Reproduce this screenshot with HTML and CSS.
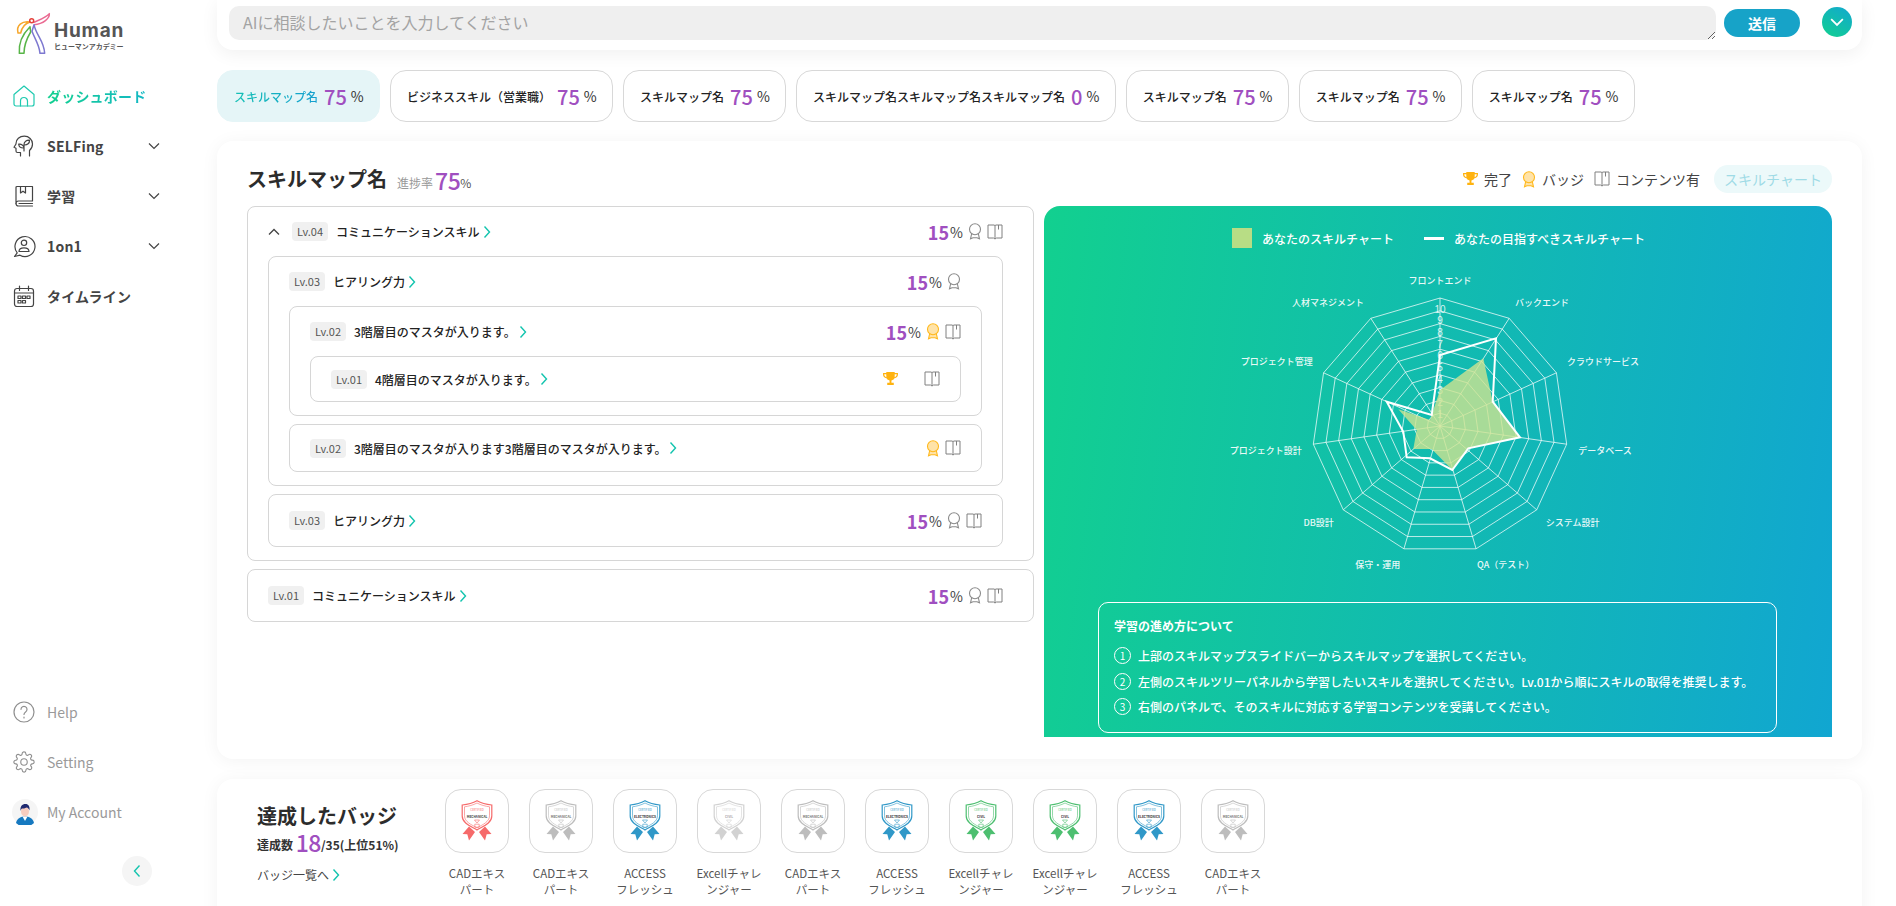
FILE: index.html
```html
<!DOCTYPE html>
<html lang="ja">
<head>
<meta charset="utf-8">
<title>スキルマップ</title>
<link rel="stylesheet" href="styles.css">
</head>
<body>
<svg class="defs" width="0" height="0" aria-hidden="true">
  <defs>
    <symbol id="i-home" viewBox="0 0 24 24"><path d="M2 10.500 12 2l10 8.500V20a2 2 0 0 1-2 2H4a2 2 0 0 1-2-2Z"/><path d="M8.500 22v-5a3.500 3.500 0 0 1 7 0v5"/></symbol>
    <symbol id="i-head" viewBox="0 0 24 24"><path d="M8.500 22v-3.500H5.500A1.500 1.500 0 0 1 4 17v-2.700l-2-1 2-3.300V9.500C4 5.400 7.500 2.200 12.300 2.200c4.700 0 8.200 3.400 8.200 7.800 0 2.700-1.100 4.800-3 6.500V22"/><path d="M12 17v-6.500c0-2.800 2.500-4.500 5.500-4.300.2 3-2 5-5.500 4.800M12 14c-3 .2-5-1.200-5.300-3.800 2.700-.4 5 1 5.300 3.800"/></symbol>
    <symbol id="i-book" viewBox="0 0 24 24"><path d="M5 2.500h15.500V17H6.500A2.500 2.500 0 0 0 4 19.500V3.500a1 1 0 0 1 1-1Z"/><path d="M4 19.500A2.500 2.500 0 0 0 6.500 22h14M7 19.500h13.500M8.500 2.500V9l2.500-1.800L13.500 9V2.500"/></symbol>
    <symbol id="i-talk" viewBox="0 0 24 24"><path d="M5.200 18.800A10 10 0 1 1 8 21.200L2.500 22.500Z"/><circle cx="12" cy="8.800" r="2.700"/><path d="M7 17.500c0-2.600 2-3.700 5-3.700s5 1.100 5 3.700Z"/></symbol>
    <symbol id="i-cal" viewBox="0 0 24 24"><rect x="2.500" y="4.500" width="19" height="18" rx="2.500"/><path d="M2.500 9h19M7.500 2v4.500M16.500 2v4.500"/><path d="M6 12h3v2.500H6ZM10.500 12h3v2.500h-3ZM15 12h3v2.500h-3ZM6 16.500h3V19H6ZM10.500 16.500h3V19h-3Z"/></symbol>
    <symbol id="i-help" viewBox="0 0 24 24"><circle cx="12" cy="12" r="10"/><path d="M9 9.300a3 3 0 1 1 4.600 2.600c-1 .7-1.600 1.200-1.600 2.600M12 17v1"/></symbol>
    <symbol id="i-gear" viewBox="-1 -1 26 26"><circle cx="12" cy="12" r="3.500"/><path d="M19.400 15a1.650 1.650 0 0 0 .33 1.820l.06.06a2 2 0 0 1 0 2.830 2 2 0 0 1-2.830 0l-.06-.06a1.650 1.650 0 0 0-1.820-.33 1.650 1.650 0 0 0-1 1.510V21a2 2 0 0 1-2 2 2 2 0 0 1-2-2v-.09A1.650 1.650 0 0 0 9 19.400a1.650 1.650 0 0 0-1.820.33l-.06.06a2 2 0 0 1-2.830 0 2 2 0 0 1 0-2.830l.06-.06a1.650 1.650 0 0 0 .33-1.820 1.650 1.650 0 0 0-1.510-1H3a2 2 0 0 1-2-2 2 2 0 0 1 2-2h.09A1.650 1.650 0 0 0 4.600 9a1.650 1.650 0 0 0-.33-1.820l-.06-.06a2 2 0 0 1 0-2.830 2 2 0 0 1 2.830 0l.06.06a1.650 1.650 0 0 0 1.820.33H9a1.650 1.650 0 0 0 1-1.510V3a2 2 0 0 1 2-2 2 2 0 0 1 2 2v.09a1.650 1.650 0 0 0 1 1.510 1.650 1.650 0 0 0 1.820-.33l.06-.06a2 2 0 0 1 2.830 0 2 2 0 0 1 0 2.830l-.06.06a1.650 1.650 0 0 0-.33 1.820V9a1.650 1.650 0 0 0 1.510 1H21a2 2 0 0 1 2 2 2 2 0 0 1-2 2h-.09a1.650 1.650 0 0 0-1.510 1z"/></symbol>
    <symbol id="i-down" viewBox="0 0 12 8"><path d="M1 1.500 6 6.500l5-5"/></symbol>
    <symbol id="i-up" viewBox="0 0 12 8"><path d="M1 6.500 6 1.500l5 5"/></symbol>
    <symbol id="i-next" viewBox="0 0 8 14"><path d="M1.500 1.500 6.500 7l-5 5.500"/></symbol>
    <symbol id="i-prev" viewBox="0 0 8 14"><path d="M6.500 1.500 1.500 7l5 5.500"/></symbol>
    <symbol id="i-medal" viewBox="0 0 14 17"><path d="M3.700 10.500 2.500 15.800l2.500-1h4l2.500 1-1.200-5.300"/><circle cx="7" cy="6.200" r="5.500"/></symbol>
    <symbol id="i-open" viewBox="0 0 16 16"><path d="M1 1h6c.6 0 1 .4 1 1 0-.6.4-1 1-1h6v13H9.500L8 15l-1.500-1H1ZM8 2v13M11.500 1v4.500"/></symbol>
    <symbol id="i-trophy" viewBox="0 0 16 15"><path d="M3.500 0h9v1.200H16v1.600C16 5 14.500 6.400 12.300 6.800 11.600 8 10.500 8.800 9 9v2.500h2.500V14h-7v-2.500H7V9C5.500 8.800 4.400 8 3.700 6.800 1.500 6.400 0 5 0 2.800V1.200h3.500Zm0 2.400H1.300c0 1.500.9 2.600 2.300 3.100a8 8 0 0 1-.1-1.200Zm9 0v1.900a8 8 0 0 1-.1 1.200c1.400-.5 2.300-1.600 2.300-3.100Z"/></symbol>
    <symbol id="b-shield" viewBox="0 0 32 42"><path class="bf" d="M8 26.500 1.500 34l4.800.3L8 40.500l6-8.500ZM24 26.500 30.500 34l-4.800.3L24 40.500l-6-8.500Z"/><path class="bfill" d="M16 .8C12 3 6 4.500 1.200 5v11c0 7 8 10 14.800 14 6.800-4 14.800-7 14.800-14V5C26 4.500 20 3 16 .8Z"/><path class="bs2" d="M16 3C12.500 5 7.500 6.300 3.500 6.800v9c0 6 7 9 12.500 12 5.500-3 12.500-6 12.500-12v-9C24.500 6.300 19.500 5 16 3Z"/><path class="bs2" d="M13.500 20h5L16 23ZM13.800 24.200h4.400v3h-4.400Z"/></symbol>
    <symbol id="b-mech" viewBox="0 0 32 42"><use href="#b-shield"/><text class="bt1" x="16" y="10.500">CERTIFIED</text><text class="bt2" x="16" y="18">MECHANICAL</text></symbol>
    <symbol id="b-elec" viewBox="0 0 32 42"><use href="#b-shield"/><text class="bt1" x="16" y="10.500">CERTIFIED</text><text class="bt2" x="16" y="18">ELECTRONICS</text></symbol>
    <symbol id="b-civil" viewBox="0 0 32 42"><use href="#b-shield"/><text class="bt1" x="16" y="10.500">CERTIFIED</text><text class="bt2" x="16" y="18">CIVIL</text></symbol>
    <polygon id="ring" points="0,-1 .5406,-.8413 .9096,-.4154 .9898,.1423 .7557,.6549 .2817,.9595 -.2817,.9595 -.7557,.6549 -.9898,.1423 -.9096,-.4154 -.5406,-.8413"/>
  </defs>
</svg>

<div class="app">
  <aside class="side">
    <div class="logo">
      <svg class="logo-mark" viewBox="0 0 135 156">
        <path class="lg-pink" d="M70 44c15-8 33-12 48-27 1 14-17 31-46 33"/>
        <path class="lg-orange" d="M24 75C18 52 36 38 60 42c-14 4-24 14-28 33Z"/>
        <path class="lg-green" d="M28 136c-3-30 8-56 32-80l2 16C50 92 42 114 42 136Z"/>
        <path class="lg-violet" d="M72 50c6 32 30 48 32 86H90C88 110 74 92 66 70Z"/>
        <circle class="lg-red" cx="65" cy="38" r="6"/>
      </svg>
      <div class="logo-words">
        <span class="logo-en">Human</span>
        <span class="logo-ja">ヒューマンアカデミー</span>
      </div>
    </div>
    <nav class="nav">
      <a class="nav-item active"><svg class="nav-ico"><use href="#i-home"/></svg><span class="nav-label">ダッシュボード</span></a>
      <a class="nav-item"><svg class="nav-ico"><use href="#i-head"/></svg><span>SELFing</span><svg class="nav-caret"><use href="#i-down"/></svg></a>
      <a class="nav-item"><svg class="nav-ico"><use href="#i-book"/></svg><span>学習</span><svg class="nav-caret"><use href="#i-down"/></svg></a>
      <a class="nav-item"><svg class="nav-ico"><use href="#i-talk"/></svg><span>1on1</span><svg class="nav-caret"><use href="#i-down"/></svg></a>
      <a class="nav-item"><svg class="nav-ico"><use href="#i-cal"/></svg><span>タイムライン</span></a>
    </nav>
    <div class="side-foot">
      <a class="nav-item muted"><svg class="nav-ico"><use href="#i-help"/></svg><span>Help</span></a>
      <a class="nav-item muted"><svg class="nav-ico"><use href="#i-gear"/></svg><span>Setting</span></a>
      <a class="nav-item muted">
        <svg class="avatar" viewBox="0 0 26 26">
          <circle class="av-bg" cx="13" cy="13" r="13"/>
          <path class="av-suit" d="M4 24c1-5 5-6.500 9-6.500s8 1.500 9 6.500a13 13 0 0 1-18 0Z"/>
          <path class="av-shirt" d="M10.500 17.500h5L13 22Z"/>
          <ellipse class="av-face" cx="13" cy="12.500" rx="4" ry="5"/>
          <path class="av-hair" d="M8.500 12C8 7.500 10 5 13.500 5c3 0 4.500 2.500 4 6.500-.7-1.700-1.500-2.700-3-3-1.500 1-3.500 1-4.500 1-.8.500-1.200 1.300-1.500 2.500Z"/>
        </svg>
        <span>My Account</span>
      </a>
      <button class="collapse" type="button" aria-label="閉じる"><svg class="collapse-ico"><use href="#i-prev"/></svg></button>
    </div>
  </aside>

  <main class="main">
    <section class="ask">
      <textarea class="ask-input" placeholder="AIに相談したいことを入力してください"></textarea>
      <button class="ask-send" type="button">送信</button>
      <button class="ask-toggle" type="button" aria-label="開閉"><svg class="ask-toggle-ico"><use href="#i-down"/></svg></button>
    </section>

    <div class="tabs">
      <a class="tab current"><span class="tab-name">スキルマップ名</span><b class="tab-num">75</b><span class="tab-pc">%</span></a>
      <a class="tab"><span class="tab-name">ビジネススキル（営業職）</span><b class="tab-num">75</b><span class="tab-pc">%</span></a>
      <a class="tab"><span class="tab-name">スキルマップ名</span><b class="tab-num">75</b><span class="tab-pc">%</span></a>
      <a class="tab"><span class="tab-name">スキルマップ名スキルマップ名スキルマップ名</span><b class="tab-num">0</b><span class="tab-pc">%</span></a>
      <a class="tab"><span class="tab-name">スキルマップ名</span><b class="tab-num">75</b><span class="tab-pc">%</span></a>
      <a class="tab"><span class="tab-name">スキルマップ名</span><b class="tab-num">75</b><span class="tab-pc">%</span></a>
      <a class="tab"><span class="tab-name">スキルマップ名</span><b class="tab-num">75</b><span class="tab-pc">%</span></a>
    </div>

    <section class="card skill">
      <header class="skill-head">
        <h1 class="skill-title">スキルマップ名</h1>
        <span class="rate-label">進捗率</span><b class="rate-num">75</b><span class="rate-pc">%</span>
        <div class="keys">
          <span class="key"><svg class="ic-trophy"><use href="#i-trophy"/></svg>完了</span>
          <span class="key"><svg class="ic-medal gold"><use href="#i-medal"/></svg>バッジ</span>
          <span class="key"><svg class="ic-open"><use href="#i-open"/></svg>コンテンツ有</span>
          <span class="chip">スキルチャート</span>
        </div>
      </header>
      <div class="skill-body">
        <div class="tree">
          <div class="node root">
            <div class="row">
              <svg class="row-caret"><use href="#i-up"/></svg>
              <span class="lv">Lv.04</span><span class="name">コミュニケーションスキル</span><svg class="next"><use href="#i-next"/></svg>
              <div class="meta"><b class="pct">15</b><span class="pct-u">%</span><svg class="ic-medal"><use href="#i-medal"/></svg><svg class="ic-open"><use href="#i-open"/></svg></div>
            </div>
            <div class="kids">
              <div class="node">
                <div class="row">
                  <span class="lv">Lv.03</span><span class="name">ヒアリング力</span><svg class="next"><use href="#i-next"/></svg>
                  <div class="meta"><b class="pct">15</b><span class="pct-u">%</span><svg class="ic-medal"><use href="#i-medal"/></svg><span class="ic-slot"></span></div>
                </div>
                <div class="kids">
                  <div class="node">
                    <div class="row">
                      <span class="lv">Lv.02</span><span class="name">3階層目のマスタが入ります。</span><svg class="next"><use href="#i-next"/></svg>
                      <div class="meta"><b class="pct">15</b><span class="pct-u">%</span><svg class="ic-medal gold"><use href="#i-medal"/></svg><svg class="ic-open"><use href="#i-open"/></svg></div>
                    </div>
                    <div class="kids">
                      <div class="node leaf">
                        <div class="row">
                          <span class="lv">Lv.01</span><span class="name">4階層目のマスタが入ります。</span><svg class="next"><use href="#i-next"/></svg>
                          <div class="meta wide"><svg class="ic-trophy"><use href="#i-trophy"/></svg><svg class="ic-open"><use href="#i-open"/></svg></div>
                        </div>
                      </div>
                    </div>
                  </div>
                  <div class="node solo-s">
                    <div class="row">
                      <span class="lv">Lv.02</span><span class="name">3階層目のマスタが入ります3階層目のマスタが入ります。</span><svg class="next"><use href="#i-next"/></svg>
                      <div class="meta"><svg class="ic-medal gold"><use href="#i-medal"/></svg><svg class="ic-open"><use href="#i-open"/></svg></div>
                    </div>
                  </div>
                </div>
              </div>
              <div class="node solo">
                <div class="row">
                  <span class="lv">Lv.03</span><span class="name">ヒアリング力</span><svg class="next"><use href="#i-next"/></svg>
                  <div class="meta"><b class="pct">15</b><span class="pct-u">%</span><svg class="ic-medal"><use href="#i-medal"/></svg><svg class="ic-open"><use href="#i-open"/></svg></div>
                </div>
              </div>
            </div>
          </div>
          <div class="node root solo">
            <div class="row">
              <span class="lv">Lv.01</span><span class="name">コミュニケーションスキル</span><svg class="next"><use href="#i-next"/></svg>
              <div class="meta"><b class="pct">15</b><span class="pct-u">%</span><svg class="ic-medal"><use href="#i-medal"/></svg><svg class="ic-open"><use href="#i-open"/></svg></div>
            </div>
          </div>
        </div>

        <div class="panel">
          <div class="legend">
            <span class="leg"><i class="leg-box"></i>あなたのスキルチャート</span>
            <span class="leg"><i class="leg-line"></i>あなたの目指すべきスキルチャート</span>
          </div>
          <svg class="radar" viewBox="1200 250 480 340" width="480" height="340">
            <g transform="translate(1440 426)">
              <g class="grid">
                <use href="#ring" transform="scale(12.8)"/><use href="#ring" transform="scale(25.6)"/><use href="#ring" transform="scale(38.4)"/><use href="#ring" transform="scale(51.2)"/><use href="#ring" transform="scale(64)"/><use href="#ring" transform="scale(76.8)"/><use href="#ring" transform="scale(89.6)"/><use href="#ring" transform="scale(102.4)"/><use href="#ring" transform="scale(115.2)"/><use href="#ring" transform="scale(128)"/>
                <path d="M0 0V-128M0 0 69.2-107.7M0 0 116.4-53.200M0 0 126.700 18.200M0 0 96.700 83.800M0 0 36.100 122.800M0 0-36.100 122.800M0 0-96.700 83.800M0 0-126.700 18.200M0 0-116.400-53.200M0 0-69.200-107.700"/>
              </g>
              <g class="ticks">
                <text y="-11.700">1</text><text y="-23.400">2</text><text y="-35.100">3</text><text y="-46.800">4</text><text y="-58.500">5</text><text y="-70.200">6</text><text y="-81.900">7</text><text y="-93.600">8</text><text y="-105.300">9</text><text y="-117">10</text>
              </g>
              <polygon class="mine" points="0,-36 43.300,-67.700 52.700,-24.300 80,11.300 28.300,22.300 12.300,44 -8.300,23 -26.700,23 -23.300,4 -41.700,-16.700 -10,-6"/>
              <polygon class="goal" points="0,-71 56,-87.700 52.700,-24.300 80,11.300 28.300,22.300 12.300,44 -10,32.300 -33.300,31.300 -36.700,5.700 -53.300,-24.300 -8.300,-11"/>
            </g>
            <g class="axis">
              <text x="1440" y="280.700">フロントエンド</text>
              <text x="1542" y="302">バックエンド</text>
              <text x="1603" y="361.700">クラウドサービス</text>
              <text x="1605" y="450.700">データベース</text>
              <text x="1572.700" y="522">システム設計</text>
              <text x="1505.700" y="564.300">QA（テスト）</text>
              <text x="1377.700" y="564.300">保守・運用</text>
              <text x="1318.700" y="522">DB設計</text>
              <text x="1265.700" y="450.700">プロジェクト設計</text>
              <text x="1276.700" y="361.700">プロジェクト管理</text>
              <text x="1328" y="302">人材マネジメント</text>
            </g>
          </svg>
          <div class="howto">
            <p class="howto-title">学習の進め方について</p>
            <p class="howto-line"><span class="num">1</span>上部のスキルマップスライドバーからスキルマップを選択してください。</p>
            <p class="howto-line"><span class="num">2</span>左側のスキルツリーパネルから学習したいスキルを選択してください。Lv.01から順にスキルの取得を推奨します。</p>
            <p class="howto-line"><span class="num">3</span>右側のパネルで、そのスキルに対応する学習コンテンツを受講してください。</p>
          </div>
        </div>
      </div>
    </section>

    <section class="card badges">
      <div class="badge-sum">
        <h2 class="badge-title">達成したバッジ</h2>
        <p class="badge-count">達成数 <b class="badge-num">18</b>/35(上位51%)</p>
        <a class="badge-link">バッジ一覧へ<svg class="next"><use href="#i-next"/></svg></a>
      </div>
      <ul class="badge-list">
        <li class="badge"><span class="tile c-red"><svg class="bdg"><use href="#b-mech"/></svg></span><span class="cap">CADエキス<br>パート</span></li>
        <li class="badge"><span class="tile c-grey"><svg class="bdg"><use href="#b-mech"/></svg></span><span class="cap">CADエキス<br>パート</span></li>
        <li class="badge"><span class="tile c-blue"><svg class="bdg"><use href="#b-elec"/></svg></span><span class="cap">ACCESS<br>フレッシュ</span></li>
        <li class="badge"><span class="tile c-pale"><svg class="bdg"><use href="#b-civil"/></svg></span><span class="cap">Excellチャレ<br>ンジャー</span></li>
        <li class="badge"><span class="tile c-grey"><svg class="bdg"><use href="#b-mech"/></svg></span><span class="cap">CADエキス<br>パート</span></li>
        <li class="badge"><span class="tile c-blue"><svg class="bdg"><use href="#b-elec"/></svg></span><span class="cap">ACCESS<br>フレッシュ</span></li>
        <li class="badge"><span class="tile c-green"><svg class="bdg"><use href="#b-civil"/></svg></span><span class="cap">Excellチャレ<br>ンジャー</span></li>
        <li class="badge"><span class="tile c-green"><svg class="bdg"><use href="#b-civil"/></svg></span><span class="cap">Excellチャレ<br>ンジャー</span></li>
        <li class="badge"><span class="tile c-blue"><svg class="bdg"><use href="#b-elec"/></svg></span><span class="cap">ACCESS<br>フレッシュ</span></li>
        <li class="badge"><span class="tile c-grey"><svg class="bdg"><use href="#b-mech"/></svg></span><span class="cap">CADエキス<br>パート</span></li>
      </ul>
    </section>
  </main>
</div>
</body>
</html>
```

FILE: styles.css
```css
* { box-sizing: border-box; }
html, body { margin: 0; height: 100%; overflow: hidden; background: #fff; }
body { font-family: "Noto Sans CJK JP", "Noto Sans", sans-serif; color: #333; font-size: 12px; }
p, h1, h2, ul { margin: 0; padding: 0; }
ul { list-style: none; }
button { font: inherit; border: 0; cursor: pointer; }
.defs { position: absolute; }
svg { display: block; flex: none; fill: none; stroke: currentColor; }

.app { display: flex; height: 906px; overflow: hidden; }

/* sidebar */
.side { width: 217px; flex: none; display: flex; flex-direction: column; height: 906px; }
.logo { height: 71px; display: flex; align-items: flex-start; padding: 8px 0 0 10px; }
.logo-mark { width: 45px; height: 52px; stroke-width: 4.500; fill: none; stroke-linejoin: round; }
.lg-pink { stroke: #ea6a92; }
.lg-orange { stroke: #f6a72c; }
.lg-green { stroke: #58b548; }
.lg-violet { stroke: #7d78d0; }
.lg-red { stroke: #e5403a; }
.logo-words { display: flex; flex-direction: column; margin: 12px 0 0 -1px; color: #555; }
.logo-en { font-family: Inter, sans-serif; font-weight: 700; font-size: 19px; line-height: 22px; letter-spacing: .8px; }
.logo-ja { font-size: 7px; line-height: 9px; font-weight: 700; letter-spacing: -.05px; }

.nav { display: flex; flex-direction: column; }
.nav-item { height: 50px; display: flex; align-items: center; padding-left: 14px; font-size: 14px; font-weight: 700; color: #444; gap: 13px; letter-spacing: .2px; }
.nav-ico { width: 24px; height: 24px; margin: 0 -2px; stroke-width: 1.200; stroke-linejoin: round; stroke-linecap: round; }
.nav-caret { width: 12px; height: 8px; margin-left: auto; margin-right: 57px; stroke-width: 1.200; color: #444; }
.nav-item.active .nav-ico { color: #1fcab0; }
.nav-label { background: linear-gradient(90deg, #12d08f, #14b8c4); -webkit-background-clip: text; background-clip: text; color: transparent; }
.side-foot { margin-top: auto; padding-bottom: 20px; display: flex; flex-direction: column; }
.nav-item.muted { color: #9a9a9a; font-weight: 400; letter-spacing: 0; }
.nav-item.muted .nav-ico { color: #8f8f8f; }
.avatar { width: 26px; height: 26px; margin: 0 -4px 0 -2px; stroke: none; }
.av-bg { fill: #f5f5f5; }
.av-suit { fill: #1679c0; }
.av-shirt { fill: #fff; }
.av-face { fill: #f8cdbf; }
.av-hair { fill: #202a70; }
.collapse { width: 30px; height: 30px; border-radius: 50%; background: #f5f5f5; margin: 19px 0 0 122px; display: flex; align-items: center; justify-content: center; padding: 0; }
.collapse-ico { width: 8px; height: 14px; color: #14c4ae; stroke-width: 1.400; }

/* main */
.main { width: 1645px; flex: none; display: flex; flex-direction: column; height: 906px; overflow: visible; }
.ask { height: 50px; flex: none; background: #fff; border-radius: 0 0 16px 16px; box-shadow: 0 4px 18px rgba(0,0,0,.06); display: flex; align-items: flex-start; padding: 6px 10px 0 12px; }
.ask-input { width: 1487px; height: 34px; min-height: 34px; background: #efefef; border: 0; border-radius: 10px; padding: 3px 14px; font: 400 16px/26px "Noto Sans CJK JP", sans-serif; color: #333; outline: 0; }
.ask-input::placeholder { color: #a3a3a3; opacity: 1; }
.ask-send { width: 76px; height: 28px; margin: 3px 0 0 8px; border-radius: 14px; background: #17a3c8; color: #fff; font-size: 14px; font-weight: 700; padding: 0; }
.ask-toggle { width: 30px; height: 30px; margin: 1px 0 0 22px; border-radius: 50%; padding: 0; background: linear-gradient(30deg, #12d08f, #12a8d0); display: flex; align-items: center; justify-content: center; }
.ask-toggle-ico { width: 14px; height: 10px; color: #fff; stroke-width: 1.500; }

.tabs { display: flex; gap: 10px; margin-top: 20px; height: 52px; flex: none; }
.tab { display: flex; align-items: center; height: 52px; padding: 0 15.300px 0 16px; border: 1px solid #d8d8d8; border-radius: 16px; background: #fff; white-space: nowrap; }
.tab.current { background: #e5f5f7; border-color: #e5f5f7; }
.tab-name { font-size: 12px; font-weight: 500; color: #222; }
.tab.current .tab-name { background: linear-gradient(90deg, #14c0b4, #149fd0); -webkit-background-clip: text; background-clip: text; color: transparent; }
.tab-num { font-size: 20px; font-weight: 500; color: #a04fc0; margin-left: 6px; }
.tab-pc { font-size: 14px; color: #333; margin-left: 4px; }

.card { background: #fff; border-radius: 16px; box-shadow: 0 2px 18px rgba(0,0,0,.05); }
.skill { margin-top: 19px; height: 618px; flex: none; padding: 0 30px; }
.skill-head { height: 65px; display: flex; align-items: center; padding-top: 11px; }
.skill-title { font-size: 20px; font-weight: 700; color: #2c2c2c; line-height: 28px; }
.rate-label { font-size: 12px; color: #999; margin: 6px 2px 0 10px; }
.rate-num { font-size: 23px; font-weight: 500; color: #a04fc0; line-height: 28px; margin-top: 1px; letter-spacing: -.5px; }
.rate-pc { font-size: 12px; color: #555; margin-top: 7px; }
.keys { margin-left: auto; display: flex; align-items: center; font-size: 14px; color: #444; }
.key { display: flex; align-items: center; gap: 6px; margin-right: 10px; }
.chip { width: 118px; height: 28px; margin-left: 4px; border-radius: 14px; background: #ecf9fa; color: #9fdbe6; display: flex; align-items: center; justify-content: center; }
.ic-trophy { width: 15px; height: 14px; fill: #ffb30f; stroke: none; }
.ic-medal { width: 14px; height: 17px; color: #8a8a8a; stroke-width: 1.100; }
.ic-medal.gold { color: #ffb81c; fill: #ffe3a8; }
.ic-open { width: 16px; height: 16px; color: #808080; stroke-width: 1; }
.ic-slot { width: 16px; height: 16px; }

.skill-body { display: flex; gap: 10px; align-items: flex-start; }
.tree { width: 787px; flex: none; display: flex; flex-direction: column; gap: 8px; }
.node { border: 1px solid #d6d6d6; border-radius: 8px; padding: 0 20px 13px; background: #fff; }
.root { padding: 0 30px 13px 20px; }
.row { height: 49px; display: flex; align-items: center; font-size: 12px; }
.kids { display: flex; flex-direction: column; gap: 8px; }
.node.leaf { padding-bottom: 0; height: 46px; }
.leaf .row { height: 44px; }
.node.solo-s { padding-bottom: 0; height: 48px; }
.solo-s .row { height: 46px; }
.node.solo { padding-bottom: 0; height: 53px; }
.solo .row { height: 51px; }
.row-caret { width: 12px; height: 8px; margin-right: 12px; color: #444; stroke-width: 1.300; }
.lv { width: 36px; height: 19px; background: #f0f0f0; border-radius: 4px; color: #555; font-size: 11px; line-height: 19px; text-align: center; margin-right: 8px; flex: none; }
.name { font-weight: 500; color: #222; white-space: nowrap; }
.next { width: 8px; height: 14px; margin-left: 3px; color: #12c4ae; stroke-width: 1.400; }
.meta { margin-left: auto; display: flex; align-items: center; color: #444; }
.pct { font-size: 18px; font-weight: 700; color: #a04fc0; line-height: 20px; }
.pct-u { font-size: 14px; margin: 0 5px 0 1px; }
.meta .ic-medal { margin-right: 5px; }
.meta.wide .ic-trophy { margin-right: 26px; }

.panel { width: 788px; height: 531px; flex: none; overflow: hidden; border-radius: 16px 16px 0 0; background: linear-gradient(98deg, #12d08f 0%, #11a6d1 100%); color: #fff; display: flex; flex-direction: column; }
.legend { height: 44px; flex: none; display: flex; align-items: flex-end; justify-content: center; gap: 30px; font-size: 12px; font-weight: 500; padding: 0 0 2px 0; margin-left: 1px; }
.leg { display: flex; align-items: center; gap: 10px; height: 20px; }
.leg-box { width: 20px; height: 20px; background: #b8dd85; }
.leg-line { width: 20px; height: 3px; background: #fff; }
.radar { margin-left: 156px; fill: none; stroke: none; }
.grid use, .grid path { fill: none; stroke: rgba(255,255,255,.72); stroke-width: 1; vector-effect: non-scaling-stroke; }
#ring { vector-effect: non-scaling-stroke; }
.ticks text { fill: rgba(255,255,255,.85); font-size: 10px; text-anchor: middle; dominant-baseline: central; font-family: "Liberation Sans", sans-serif; }
.mine { fill: rgba(206,227,145,.8); }
.goal { fill: none; stroke: #fff; stroke-width: 2; stroke-linejoin: miter; }
.axis text { fill: rgba(255,255,255,.92); font-size: 9px; font-weight: 500; text-anchor: middle; dominant-baseline: central; }
.howto { margin: 12px 55px 0 54px; height: 131px; flex: none; border: 1px solid #fff; border-radius: 10px; padding: 13px 15px; font-size: 12px; font-weight: 500; }
.howto-title { font-weight: 700; line-height: 20px; margin-bottom: 7px; }
.howto-line { display: flex; align-items: center; height: 25.500px; gap: 7px; white-space: nowrap; }
.num { width: 17px; height: 17px; border: 1px solid #fff; border-radius: 50%; display: flex; align-items: center; justify-content: center; font-size: 10px; font-weight: 400; flex: none; }

/* badges */
.badges { margin-top: 20px; height: 160px; flex: none; display: flex; padding: 10px 0 0 40px; }
.badge-sum { width: 188px; flex: none; padding-top: 13px; }
.badge-title { font-size: 20px; font-weight: 700; line-height: 28px; color: #2c2c2c; }
.badge-count { font-size: 12px; font-weight: 700; line-height: 30px; color: #333; white-space: nowrap; }
.badge-num { font-size: 23px; font-weight: 500; color: #a04fc0; vertical-align: -2px; line-height: 20px; letter-spacing: -.5px; }
.badge-link { display: flex; align-items: center; font-size: 12px; color: #444; line-height: 18px; margin-top: 6px; }
.badge-list { display: flex; gap: 20px; }
.badge { width: 64px; display: flex; flex-direction: column; align-items: center; }
.tile { width: 64px; height: 64px; border: 1px solid #d8d8d8; border-radius: 16px; display: flex; align-items: center; justify-content: center; background: #fff; }
.bdg { width: 32px; height: 42px; stroke: none; }
.cap { margin-top: 12px; font-size: 11.500px; line-height: 16px; text-align: center; color: #555; white-space: nowrap; }
.bfill { fill: #fff; stroke: currentColor; stroke-width: 1.200; }
.bs2 { fill: none; stroke: currentColor; stroke-width: .6; }
.bf { fill: currentColor; stroke: none; }
.bt1 { fill: currentColor; font-size: 2.800px; text-anchor: middle; stroke: none; }
.bt2 { fill: var(--band); font-size: 3.200px; font-weight: 700; text-anchor: middle; stroke: none; }
.c-red { color: #f66a6a; --band: #444; }
.c-grey { color: #bdbdbd; --band: #777; }
.c-pale { color: #d2d2d2; --band: #aaa; }
.c-blue { color: #3098c8; --band: #333; }
.c-green { color: #4dbf70; --band: #333; }
```
